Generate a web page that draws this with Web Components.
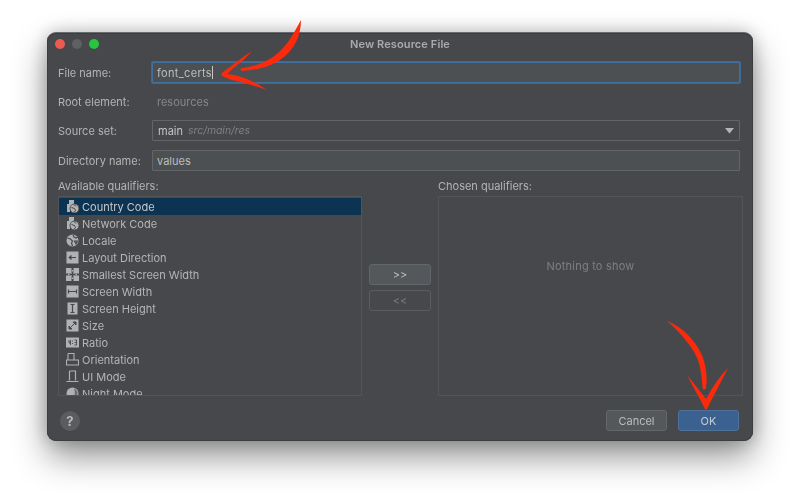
<!DOCTYPE html>
<html><head><meta charset="utf-8">
<style>
html,body{margin:0;background:#fff}
body{width:800px;height:504px;overflow:hidden;font:11px "Inter","Liberation Sans",sans-serif;color:#bbbbbb;box-sizing:border-box;padding:32px 47px 0}
</style></head><body>
<template id="t-window"><style>
:host{display:flex;flex-direction:column;position:relative;width:706px;height:409px;box-sizing:border-box;background:#47484b;border-radius:9px;border-top:1px solid #6a6b6d;box-shadow:inset 0 0 0 1px #3c3d3f,0 16px 34px rgba(0,0,0,.42),0 0 18px rgba(0,0,0,.22);filter:blur(.3px)}
.bar{flex:none;height:23px;box-sizing:border-box;padding-bottom:2px;display:flex;align-items:center;justify-content:center;position:relative;font-weight:600;color:#a9aaab;font-size:11px;letter-spacing:.1px}
.lights{position:absolute;left:8px;top:6px;display:flex;gap:7px}
.lights i{width:10px;height:10px;border-radius:50%}
.body{flex:1;display:flex;flex-direction:column;min-height:0}
</style>
<div class="bar"><div class="lights"><i style="background:#ee5a52"></i><i style="background:#5f6064"></i><i style="background:#27c63f"></i></div><slot name="title"></slot></div>
<div class="body"><slot></slot></div></template>

<template id="t-row"><style>
:host{display:flex;align-items:center;height:21px;padding:0 13px 0 11px}
.l{width:94px;flex:none;color:#b4b4b4}
.c{flex:1;min-width:0;display:block}
</style><span class="l"><slot name="label"></slot></span><div class="c"><slot></slot></div></template>

<template id="t-field"><style>
:host{display:flex;align-items:center;height:21px;box-sizing:border-box;background:#4c5052;border:1px solid #646567;border-radius:1px;padding:0 4px;color:#bdbdbd;position:relative}
:host([focus]){box-shadow:0 0 0 1px #3d6998;border-color:#41709f;letter-spacing:.32px}
:host([plain]){background:none;border-color:transparent;color:#85878a}
:host([combo]){background:none;padding-left:5px}
svg{position:absolute;right:5px;top:7px}
</style><slot></slot></template>

<template id="t-list"><style>
:host{display:block;box-sizing:border-box;height:200px;border:1px solid #535457;overflow:hidden}
</style><slot></slot></template>

<template id="t-item"><style>
:host{display:flex;align-items:center;height:17px;gap:3px;padding-left:7px;color:#b4b5b6}
:host([sel]){background:#0c3452;color:#c6c8ca}
::slotted(svg){flex:none;width:13px;height:13px;display:block}
</style><slot name="icon"></slot><slot></slot></template>

<template id="t-btn"><style>
:host{display:flex;align-items:center;justify-content:center;width:62px;height:21px;box-sizing:border-box;border:1px solid #63666a;border-radius:3px;background:#55585b;color:#bdbdbd;font-size:11px}
:host([off]){background:none;color:#7b7c7f;border-color:#5b5c5f}
:host([pri]){background:#3b6190;border-color:#4f7299;color:#c6ccd3}
</style><slot></slot></template>

<template id="t-help"><style>
:host{display:flex;align-items:center;justify-content:center;width:20px;height:20px;border-radius:50%;background:#5a5c5f;color:#b8b9ba;font-weight:700;font-size:13px}
</style><slot></slot></template>

<template id="t-main"><style>
:host{display:flex;flex-direction:column;flex:1;min-height:0;padding-top:6px}
.rows{display:flex;flex-direction:column;gap:8px}
.cols{display:grid;grid-template-columns:304px 76px 305px;margin:8px 0 0 11px;flex:none}
.h{height:17px;line-height:14px;color:#b4b4b4}
.mid{display:flex;flex-direction:column;align-items:center;gap:5px;padding-top:85px}
.empty{height:200px;box-sizing:border-box;border:1px solid #535457;display:flex;align-items:flex-start;justify-content:center;color:#7d7f82;padding-top:62px;letter-spacing:.22px}
.foot{display:flex;align-items:center;margin-top:14px;padding:0 14px 0 13px;gap:11px}
.sp{flex:1}
::slotted(dlg-btn[slot=foot]){width:61px}
</style>
<div class="rows"><slot name="rows"></slot></div>
<div class="cols"><div><div class="h"><slot name="lh"></slot></div><slot name="list"></slot></div>
<div class="mid"><slot name="mid"></slot></div>
<div><div class="h"><slot name="rh"></slot></div><div class="empty"><slot name="empty"></slot></div></div></div>
<div class="foot"><slot name="help"></slot><div class="sp"></div><slot name="foot"></slot></div></template>

<res-window>
 <span slot="title">New Resource File</span>
 <dlg-main>
  <form-row slot="rows"><span slot="label">File name:</span><text-field focus>font_certs<span style="display:inline-block;width:1px;height:13px;background:#c8c8c8"></span></text-field></form-row>
  <form-row slot="rows"><span slot="label">Root element:</span><text-field plain>resources</text-field></form-row>
  <form-row slot="rows"><span slot="label">Source set:</span><text-field combo><span style="color:#c4c4c4">main</span><i style="color:#7f8184;margin-left:5px;font-size:10.4px">src/main/res</i></text-field></form-row>
  <form-row slot="rows" style="margin-top:1px"><span slot="label">Directory name:</span><text-field>values</text-field></form-row>
  <span slot="lh">Available qualifiers:</span>
  <qual-list slot="list">
   <qual-item sel ic="sim" style="margin-top:1px">Country Code</qual-item>
   <qual-item ic="sim">Network Code</qual-item>
   <qual-item ic="globe">Locale</qual-item>
   <qual-item ic="dir">Layout Direction</qual-item>
   <qual-item ic="small">Smallest Screen Width</qual-item>
   <qual-item ic="w">Screen Width</qual-item>
   <qual-item ic="h">Screen Height</qual-item>
   <qual-item ic="size">Size</qual-item>
   <qual-item ic="ratio">Ratio</qual-item>
   <qual-item ic="orient">Orientation</qual-item>
   <qual-item ic="ui">UI Mode</qual-item>
   <qual-item ic="night">Night Mode</qual-item>
  </qual-list>
  <dlg-btn slot="mid">&gt;&gt;</dlg-btn><dlg-btn slot="mid" off>&lt;&lt;</dlg-btn>
  <span slot="rh">Chosen qualifiers:</span>
  <span slot="empty">Nothing to show</span>
  <help-btn slot="help">?</help-btn>
  <dlg-btn slot="foot">Cancel</dlg-btn><dlg-btn slot="foot" pri>OK</dlg-btn>
 </dlg-main>
 <svg style="position:absolute;left:-47px;top:-33px;pointer-events:none" width="800" height="504" viewBox="0 0 800 504">
  <g fill="#fb2a0c">
   <path d="M301 20C301 28 299 35 297 40C292 50 287 55 280 60C270 67 256 70 242 71C240 70 240 69 242 68C254 67 265 62 273 57C280 52 284 47 288 42C293 35 297 27 301 20Z"/>
   <path d="M252 51C246 58 240 63 235 67C231 70 229 72 227 74C240 75 256 82 267 90C255 86 242 82 232 80C228 79 225 77 222 76C221 75 221 73 223 72C232 66 242 57 252 51Z"/>
   <path d="M667 321C675 324 684 330 690 337C698 346 703 355 705 365C707 374 707 381 706 388C705 390 703 390 702.5 388C702 378 701 369 698 360C694 350 688 343 683 337C678 331 673 326 667 321Z"/>
   <path d="M687 375C692 381 701 392 706 399C712 388 719 377 728 368C722 380 714 395 707.5 408C707 410 705 410 704.5 408C699 396 692 386 687 375Z"/>
  </g>
 </svg>
</res-window>
<script>
const tpl=(id)=>document.getElementById(id).content.cloneNode(true);
class Base extends HTMLElement{constructor(){super();this.attachShadow({mode:'open'}).appendChild(tpl(this.constructor.t));}}
const def=(n,t,x)=>{const C=x||class extends Base{};C.t=t;customElements.define(n,C);};
def('res-window','t-window');def('dlg-main','t-main');def('form-row','t-row');def('qual-list','t-list');def('dlg-btn','t-btn');def('help-btn','t-help');
def('text-field','t-field',class extends Base{connectedCallback(){if(this.hasAttribute('combo')&&!this.shadowRoot.querySelector('svg')){const s=document.createElementNS('http://www.w3.org/2000/svg','svg');s.setAttribute('width','9');s.setAttribute('height','6');s.setAttribute('viewBox','0 0 9 6');s.innerHTML='<path d="M0 0h9L4.5 5.5z" fill="#b4b4b4"/>';this.shadowRoot.appendChild(s);}}});
const G='#afb1b3',D='#47484b';
const box=`<rect x=".5" y=".5" width="12" height="12" fill="${G}"/>`;
const ICONS={
 sim:`<path d="M1 4h2V0h5v6H6L4 8.500v3.500H1z" fill="${G}"/><circle cx="8.500" cy="8.500" r="4.500" fill="${G}" stroke="${D}" stroke-width=".9"/><path d="M5.500 7.500l3 1 1 2-1.500 2M8 4.500l2 2" stroke="${D}" stroke-width="1" fill="none"/>`,
 globe:`<circle cx="6.500" cy="6.500" r="6" fill="${G}"/><path d="M1.500 4l3 1 2 2-1 2 1 3M7 1l1 2 2 1 2-1M8.500 7l3 0-1.500 3z" stroke="${D}" stroke-width="1.200" fill="none"/>`,
 dir:`${box}<path d="M3 6.500h7M3 6.500l2-2v4z" stroke="${D}" fill="${D}" stroke-width="1"/>`,
 small:`<path d="M0 0h5.500v5.500H0zM7.500 0H13v5.500H7.500zM0 7.500h5.500V13H0zM7.500 7.500H13V13H7.500z" fill="${G}"/><path d="M6.500 2v9M2 6.500h9" stroke="${G}" stroke-width="1.400"/><path d="M6.500 3.500v6M3.500 6.500h6" stroke="${D}" stroke-width="1"/>`,
 w:`${box}<path d="M2.500 6.500h8M2.500 4.500v4M10.500 4.500v4" stroke="${D}" stroke-width="1.200" fill="none"/>`,
 h:`<rect x="1.500" y=".5" width="10" height="12" fill="${G}"/><path d="M6.500 2.500v8M4.500 2.500h4M4.500 10.500h4" stroke="${D}" stroke-width="1.200" fill="none"/>`,
 size:`${box}<path d="M3 10l7-7M3 10V7l3 3zM10 3v3L7 3z" stroke="${D}" fill="${D}" stroke-width="1"/>`,
 ratio:`<rect y="1.500" width="13" height="10" fill="${G}"/><path d="M3 4v3h2M4.500 4v5M6.500 4.500v1M6.500 7v1M8.500 4h2v5h-2M8.500 6.500h2" stroke="${D}" stroke-width=".9" fill="none"/>`,
 orient:`<path d="M2 .5h6v6M2 .5v6M.5 7h12v5H.5z" stroke="${G}" stroke-width="1.100" fill="none"/>`,
 ui:`<path d="M3.500 1h6v9.500M3.500 1v9.500M.5 11.500h12" stroke="${G}" stroke-width="1.200" fill="none"/>`,
 night:`<circle cx="6.500" cy="6.500" r="6" fill="${G}"/><path d="M8 1.500a5 5 0 0 1 3 7 6 6 0 0 1-7 3c4 0 6-5 4-10z" fill="#6c6d70"/>`
};
def('qual-item','t-item',class extends Base{connectedCallback(){if(this.querySelector('svg'))return;const s=document.createElementNS('http://www.w3.org/2000/svg','svg');s.setAttribute('viewBox','0 0 13 13');s.setAttribute('slot','icon');s.innerHTML=ICONS[this.getAttribute('ic')];this.appendChild(s);}});
</script>
</body></html>
